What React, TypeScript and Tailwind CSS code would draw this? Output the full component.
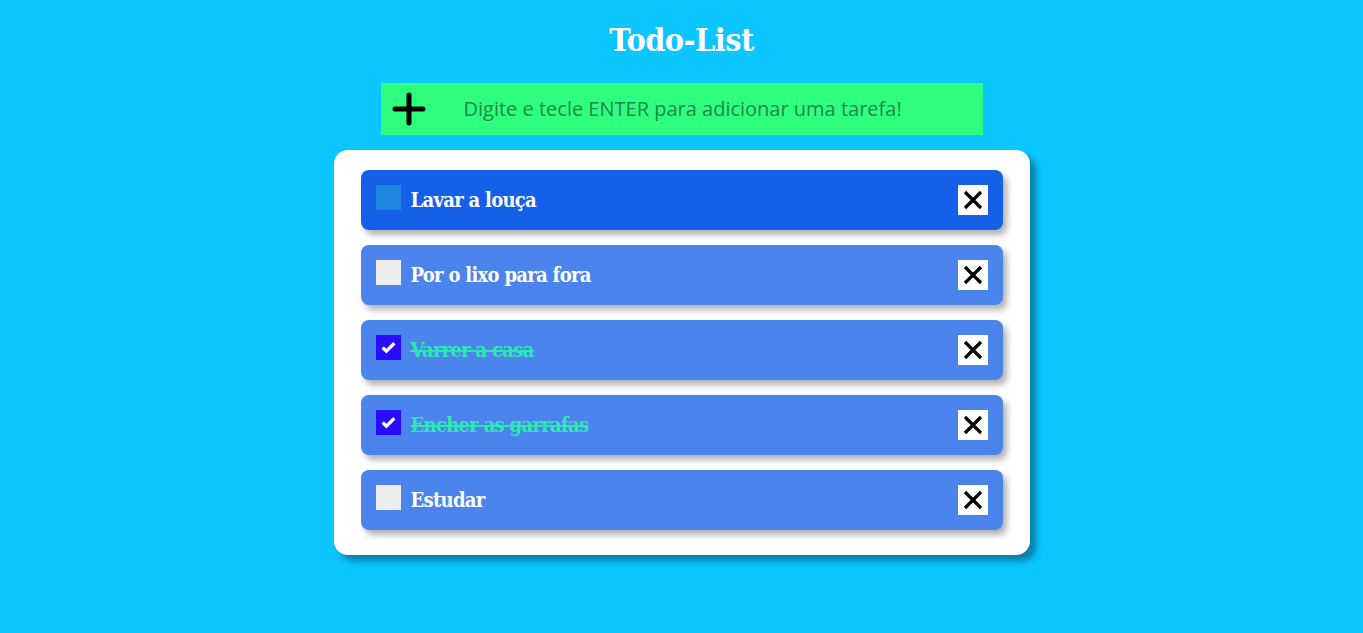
import { useState } from "react";

type Task = { id: number; text: string; done: boolean };

const initial: Task[] = [
    { id: 1, text: "Lavar a louça", done: false },
    { id: 2, text: "Por o lixo para fora", done: false },
    { id: 3, text: "Varrer a casa", done: true },
    { id: 4, text: "Encher as garrafas", done: true },
    { id: 5, text: "Estudar", done: false },
];

function TaskItem({ task, active, onToggle }: { task: Task; active: boolean; onToggle: () => void }) {
    return (
        <div
            className={`flex items-center h-[60px] px-[15px] rounded-lg shadow-[4px_5px_6px_rgba(0,0,0,0.3)] ${active ? "bg-[#1560e8]" : "bg-[#4a84ec]"}`}>
            <button
                onClick={onToggle}
                className={`self-start mt-[15px] w-[25px] h-[25px] flex items-center justify-center shrink-0 ${task.done ? "bg-[#2a0cff]" : active ? "bg-[#1e88e0]" : "bg-[#eeeeee]"}`}>
                {task.done && (
                    <svg width="17" height="17" viewBox="0 0 16 16">
                        <path d="M2.5 8 L6 11.5 L13.5 4" fill="none" stroke="white" strokeWidth="3"/>
                    </svg>
                )}
            </button>
            <span
                className={`ml-[10px] text-[20px] font-bold font-['DejaVu_Serif_Condensed','DejaVu_Serif',serif] [font-stretch:condensed] tracking-[-0.7px] ${task.done ? "text-[#2ee8b2] line-through" : "text-white"}`}>
                {task.text}
            </span>
            <button className="ml-auto w-[30px] h-[30px] bg-white flex items-center justify-center">
                <svg width="22" height="22" viewBox="0 0 22 22">
                    <path d="M3 3 L19 19 M19 3 L3 19" stroke="black" strokeWidth="3.2"/>
                </svg>
            </button>
        </div>
    );
}

export default function App() {
    const [tasks, setTasks] = useState(initial);

    return (
        <div className="min-h-screen bg-[#0cc6ff] flex flex-col items-center">
            <h1 className="mt-[18px] text-[32px] leading-[44px] font-bold text-white font-['DejaVu_Serif_Condensed','DejaVu_Serif',serif] [font-stretch:condensed] tracking-[-0.5px]">Todo-List</h1>
            <div className="mt-[21px] w-[602px] h-[52px] bg-[#2eff7e] flex items-center">
                <svg className="ml-[10px]" width="36" height="36" viewBox="0 0 36 36">
                    <path d="M18 4 V32 M4 18 H32" stroke="black" strokeWidth="5" strokeLinecap="round"/>
                </svg>
                <span className="ml-[37px] text-[20px] text-[#1d8a47] font-['Open_Sans',sans-serif]">Digite e tecle ENTER para adicionar uma tarefa!</span>
            </div>
            <div
                className="mt-[15px] w-[696px] bg-white rounded-[14px] pt-5 pb-[25px] px-[27px] flex flex-col gap-[15px] shadow-[6px_6px_6px_rgba(8,120,160,0.9)]">
                {tasks.map((t, i) => (
                    <TaskItem key={t.id} task={t} active={i === 0}
                              onToggle={() => setTasks(tasks.map(x => x.id === t.id ? { ...x, done: !x.done } : x))}/>
                ))}
            </div>
        </div>
    );
}
